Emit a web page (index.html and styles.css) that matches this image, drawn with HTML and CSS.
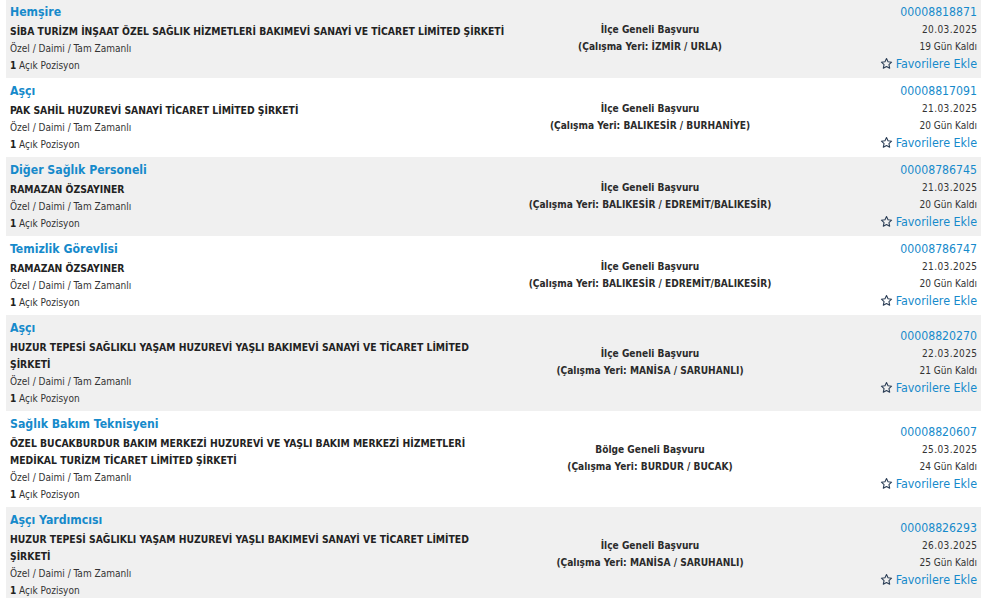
FILE: index.html
```html
<!DOCTYPE html>
<html lang="tr">
<head>
<meta charset="utf-8">
<title>İlanlar</title>
<link rel="stylesheet" href="styles.css">
</head>
<body>
<div class="list">
  <div class="row gray">
    <div class="col-main">
      <a class="title">Hemşire</a>
      <div class="company">SİBA TURİZM İNŞAAT ÖZEL SAĞLIK HİZMETLERİ BAKIMEVİ SANAYİ VE TİCARET LİMİTED ŞİRKETİ</div>
      <div class="meta">Özel / Daimi / Tam Zamanlı</div>
      <div class="meta"><b>1</b> Açık Pozisyon</div>
    </div>
    <div class="col-mid">
      <div>İlçe Geneli Başvuru</div>
      <div>(Çalışma Yeri: İZMİR / URLA)</div>
    </div>
    <div class="col-right">
      <a class="num">00008818871</a>
      <div class="small date">20.03.2025</div>
      <div class="small">19 Gün Kaldı</div>
      <a class="fav"><svg class="star" viewBox="0 0 24 24"><path d="M12 2.8l2.8 6.1 6.6.7-4.9 4.5 1.4 6.6L12 17.4l-5.9 3.3 1.4-6.6-4.9-4.5 6.6-.7z"/></svg>Favorilere Ekle</a>
    </div>
  </div>

  <div class="row white">
    <div class="col-main">
      <a class="title">Aşçı</a>
      <div class="company">PAK SAHİL HUZUREVİ SANAYİ TİCARET LİMİTED ŞİRKETİ</div>
      <div class="meta">Özel / Daimi / Tam Zamanlı</div>
      <div class="meta"><b>1</b> Açık Pozisyon</div>
    </div>
    <div class="col-mid">
      <div>İlçe Geneli Başvuru</div>
      <div>(Çalışma Yeri: BALIKESİR / BURHANİYE)</div>
    </div>
    <div class="col-right">
      <a class="num">00008817091</a>
      <div class="small date">21.03.2025</div>
      <div class="small">20 Gün Kaldı</div>
      <a class="fav"><svg class="star" viewBox="0 0 24 24"><path d="M12 2.8l2.8 6.1 6.6.7-4.9 4.5 1.4 6.6L12 17.4l-5.9 3.3 1.4-6.6-4.9-4.5 6.6-.7z"/></svg>Favorilere Ekle</a>
    </div>
  </div>

  <div class="row gray">
    <div class="col-main">
      <a class="title">Diğer Sağlık Personeli</a>
      <div class="company">RAMAZAN ÖZSAYINER</div>
      <div class="meta">Özel / Daimi / Tam Zamanlı</div>
      <div class="meta"><b>1</b> Açık Pozisyon</div>
    </div>
    <div class="col-mid">
      <div>İlçe Geneli Başvuru</div>
      <div>(Çalışma Yeri: BALIKESİR / EDREMİT/BALIKESİR)</div>
    </div>
    <div class="col-right">
      <a class="num">00008786745</a>
      <div class="small date">21.03.2025</div>
      <div class="small">20 Gün Kaldı</div>
      <a class="fav"><svg class="star" viewBox="0 0 24 24"><path d="M12 2.8l2.8 6.1 6.6.7-4.9 4.5 1.4 6.6L12 17.4l-5.9 3.3 1.4-6.6-4.9-4.5 6.6-.7z"/></svg>Favorilere Ekle</a>
    </div>
  </div>

  <div class="row white">
    <div class="col-main">
      <a class="title">Temizlik Görevlisi</a>
      <div class="company">RAMAZAN ÖZSAYINER</div>
      <div class="meta">Özel / Daimi / Tam Zamanlı</div>
      <div class="meta"><b>1</b> Açık Pozisyon</div>
    </div>
    <div class="col-mid">
      <div>İlçe Geneli Başvuru</div>
      <div>(Çalışma Yeri: BALIKESİR / EDREMİT/BALIKESİR)</div>
    </div>
    <div class="col-right">
      <a class="num">00008786747</a>
      <div class="small date">21.03.2025</div>
      <div class="small">20 Gün Kaldı</div>
      <a class="fav"><svg class="star" viewBox="0 0 24 24"><path d="M12 2.8l2.8 6.1 6.6.7-4.9 4.5 1.4 6.6L12 17.4l-5.9 3.3 1.4-6.6-4.9-4.5 6.6-.7z"/></svg>Favorilere Ekle</a>
    </div>
  </div>

  <div class="row gray">
    <div class="col-main">
      <a class="title">Aşçı</a>
      <div class="company">HUZUR TEPESİ SAĞLIKLI YAŞAM HUZUREVİ YAŞLI BAKIMEVİ SANAYİ VE TİCARET LİMİTED ŞİRKETİ</div>
      <div class="meta">Özel / Daimi / Tam Zamanlı</div>
      <div class="meta"><b>1</b> Açık Pozisyon</div>
    </div>
    <div class="col-mid">
      <div>İlçe Geneli Başvuru</div>
      <div>(Çalışma Yeri: MANİSA / SARUHANLI)</div>
    </div>
    <div class="col-right">
      <a class="num">00008820270</a>
      <div class="small date">22.03.2025</div>
      <div class="small">21 Gün Kaldı</div>
      <a class="fav"><svg class="star" viewBox="0 0 24 24"><path d="M12 2.8l2.8 6.1 6.6.7-4.9 4.5 1.4 6.6L12 17.4l-5.9 3.3 1.4-6.6-4.9-4.5 6.6-.7z"/></svg>Favorilere Ekle</a>
    </div>
  </div>

  <div class="row white">
    <div class="col-main">
      <a class="title">Sağlık Bakım Teknisyeni</a>
      <div class="company">ÖZEL BUCAKBURDUR BAKIM MERKEZİ HUZUREVİ VE YAŞLI BAKIM MERKEZİ HİZMETLERİ MEDİKAL TURİZM TİCARET LİMİTED ŞİRKETİ</div>
      <div class="meta">Özel / Daimi / Tam Zamanlı</div>
      <div class="meta"><b>1</b> Açık Pozisyon</div>
    </div>
    <div class="col-mid">
      <div>Bölge Geneli Başvuru</div>
      <div>(Çalışma Yeri: BURDUR / BUCAK)</div>
    </div>
    <div class="col-right">
      <a class="num">00008820607</a>
      <div class="small date">25.03.2025</div>
      <div class="small">24 Gün Kaldı</div>
      <a class="fav"><svg class="star" viewBox="0 0 24 24"><path d="M12 2.8l2.8 6.1 6.6.7-4.9 4.5 1.4 6.6L12 17.4l-5.9 3.3 1.4-6.6-4.9-4.5 6.6-.7z"/></svg>Favorilere Ekle</a>
    </div>
  </div>

  <div class="row gray">
    <div class="col-main">
      <a class="title">Aşçı Yardımcısı</a>
      <div class="company">HUZUR TEPESİ SAĞLIKLI YAŞAM HUZUREVİ YAŞLI BAKIMEVİ SANAYİ VE TİCARET LİMİTED ŞİRKETİ</div>
      <div class="meta">Özel / Daimi / Tam Zamanlı</div>
      <div class="meta"><b>1</b> Açık Pozisyon</div>
    </div>
    <div class="col-mid">
      <div>İlçe Geneli Başvuru</div>
      <div>(Çalışma Yeri: MANİSA / SARUHANLI)</div>
    </div>
    <div class="col-right">
      <a class="num">00008826293</a>
      <div class="small date">26.03.2025</div>
      <div class="small">25 Gün Kaldı</div>
      <a class="fav"><svg class="star" viewBox="0 0 24 24"><path d="M12 2.8l2.8 6.1 6.6.7-4.9 4.5 1.4 6.6L12 17.4l-5.9 3.3 1.4-6.6-4.9-4.5 6.6-.7z"/></svg>Favorilere Ekle</a>
    </div>
  </div>
</div>
</body>
</html>
```

FILE: styles.css
```css
* { box-sizing: border-box; }
html, body {
  margin: 0;
  padding: 0;
  background: #fff;
}
body {
  font-family: "DejaVu Sans Condensed", "DejaVu Sans", sans-serif;
  color: #222;
  font-size: 10px;
}
.list {
  width: 975px;
  margin: -1px 0 0 6px;
}
.row {
  display: flex;
  align-items: center;
  padding: 2px 4px 4px 4px;
}
.gray { background: #f0f0f0; }
.white { background: #fff; }

.col-main {
  width: 499px;
  display: flex;
  flex-direction: column;
  align-self: flex-start;
}
.title {
  color: #168acb;
  font-weight: bold;
  font-size: 12.2px;
  line-height: 22px;
}
.company {
  font-weight: bold;
  font-size: 10.3px;
  line-height: 17px;
  color: #222;
}
.meta {
  font-size: 10px;
  line-height: 17px;
  color: #333;
}
.meta b { color: #222; }

.col-mid {
  width: 282px;
  text-align: center;
  font-weight: bold;
  font-size: 10.1px;
  line-height: 17px;
  color: #2b2b2b;
}
.col-right {
  flex: 1;
  display: flex;
  flex-direction: column;
  align-items: flex-end;
  line-height: 17px;
}
.num {
  color: #168acb;
  font-size: 12.2px;
}
.small {
  font-size: 10px;
  color: #333;
}
.date { letter-spacing: 0.4px; margin-right: -0.4px; }
.fav {
  color: #168acb;
  font-size: 12.4px;
  display: flex;
  align-items: center;
  gap: 3px;
}
.star {
  width: 13px;
  height: 13px;
  fill: none;
  stroke: #2a3d55;
  stroke-width: 2;
  stroke-linejoin: round;
}
```
